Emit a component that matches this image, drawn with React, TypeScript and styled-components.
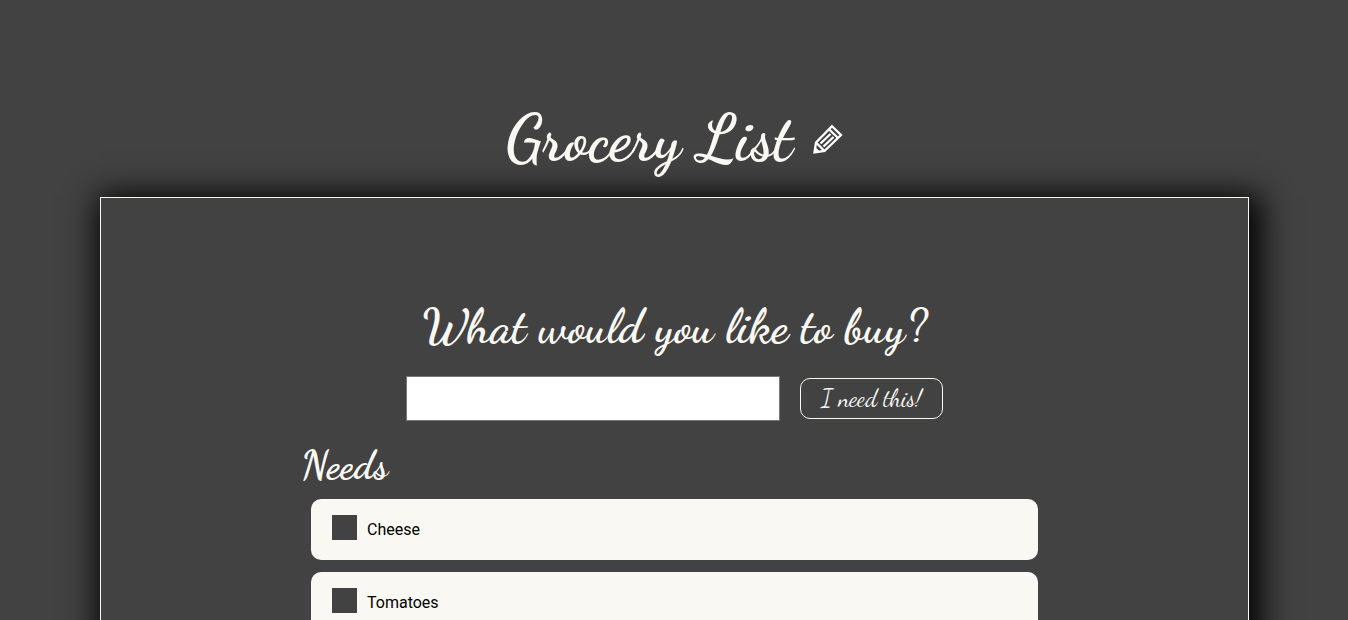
import React, { useState } from "react";
import styled, { createGlobalStyle } from "styled-components";

const charcoal = "#424242";
const cream = "#faf8f2";
const script = `"Dancing Script", "Liberation Serif", cursive`;

const GlobalStyle = createGlobalStyle`
  *, *::before, *::after { box-sizing: border-box; }
  body {
    margin: 0;
    background: ${charcoal};
    color: ${cream};
    font-family: Roboto, sans-serif;
    font-size: 16px;
  }
`;

const Page = styled.div`
  padding: 103px 99px 60px 100px;
`;

const Header = styled.header`
  display: flex;
  justify-content: center;
  align-items: center;
  gap: 19px;
  height: 72px;
  margin-bottom: 22px;
`;

const Title = styled.h1`
  margin: 0;
  font: 700 64px/72px ${script};
`;

const Pencil = styled.svg`
  width: 32px;
  height: 32px;
  fill: none;
  stroke: #fff;
  stroke-width: 2.3;
  stroke-linejoin: miter;
`;

const Panel = styled.main`
  padding: 100px 20px 48px;
  border: 1px solid ${cream};
  background: ${charcoal};
  box-shadow: 5px 5px 30px 7px #000;
`;

const Question = styled.label`
  display: block;
  text-align: center;
  font: 700 48px/58px ${script};
`;

const Form = styled.form`
  display: grid;
  gap: 20px;
`;

const EntryRow = styled.div`
  display: flex;
  justify-content: center;
  align-items: center;
  gap: 20px;
`;

const TextBox = styled.input`
  width: 374px;
  height: 45px;
  padding: 0 10px;
  border: 1px solid #767676;
  border-radius: 0;
  background: #fff;
  font: 16px/20px Roboto, sans-serif;
`;

const AddButton = styled.button`
  width: 143px;
  height: 41px;
  padding: 0;
  border: 1px solid ${cream};
  border-radius: 10px;
  background: transparent;
  color: ${cream};
  font: 400 24px/39px ${script};
`;

const Needs = styled.section`
  max-width: 747px;
  margin: 20px auto 0;
`;

const SectionTitle = styled.h2`
  margin: 0;
  font: 700 40px/48px ${script};
`;

const List = styled.ul`
  display: grid;
  gap: 12px;
  margin: 10px 10px 0;
  padding: 0;
  list-style: none;
`;

const Item = styled.li`
  height: 61px;
  padding: 16px 21px;
  border-radius: 10px;
  background: ${cream};
  color: #000;
`;

const ItemLabel = styled.label`
  display: flex;
  gap: 10px;
  line-height: 29px;
`;

const Tick = styled.input`
  appearance: none;
  width: 25px;
  height: 25px;
  margin: 0;
  background: ${charcoal};

  &:checked {
    box-shadow: inset 0 0 0 6px ${charcoal};
    background: ${cream};
  }
`;

const needs = ["Cheese", "Tomatoes"];

export default function App() {
  const [items, setItems] = useState(needs);
  const [entry, setEntry] = useState("");

  const addItem = (event: React.FormEvent) => {
    event.preventDefault();
    if (!entry.trim()) return;
    setItems([...items, entry.trim()]);
    setEntry("");
  };

  return (
    <Page>
      <GlobalStyle />
      <Header>
        <Title>Grocery List</Title>
        <Pencil viewBox="0 0 32 32" aria-hidden="true">
          <path d="M20 3.2 29 12 12.5 28 2.5 29.5 4 19.5Z" />
          <path d="M17 6.2 26 15M4 19.5 12.5 28M18.5 11 8.5 20.5M21.5 14 11.5 23.5" />
          <path d="M2.5 29.5 3.2 24 8 28.8Z" fill="#fff" stroke="none" />
        </Pencil>
      </Header>
      <Panel>
        <Form onSubmit={addItem}>
          <Question htmlFor="entry">What would you like to buy?</Question>
          <EntryRow>
            <TextBox id="entry" type="text" value={entry} onChange={(e) => setEntry(e.target.value)} />
            <AddButton type="submit">I need this!</AddButton>
          </EntryRow>
        </Form>
        <Needs>
          <SectionTitle>Needs</SectionTitle>
          <List>
            {items.map((item, index) => (
              <Item key={index}>
                <ItemLabel>
                  <Tick type="checkbox" />
                  {item}
                </ItemLabel>
              </Item>
            ))}
          </List>
        </Needs>
      </Panel>
    </Page>
  );
}
